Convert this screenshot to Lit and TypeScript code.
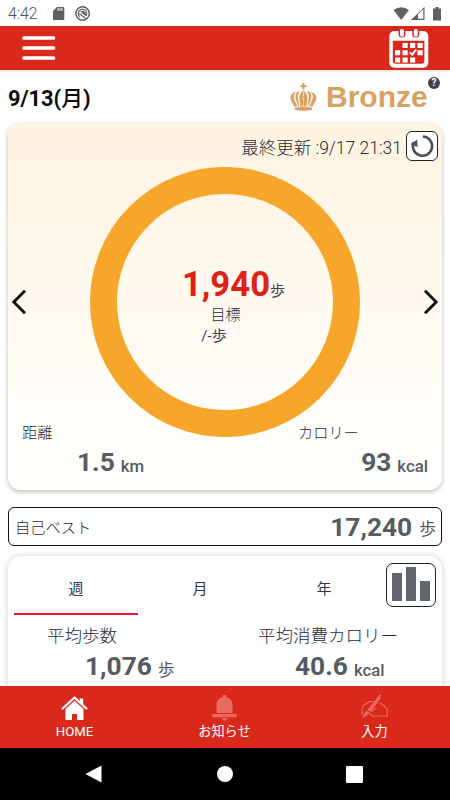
import { LitElement, html, css } from "lit";
import { customElement } from "lit/decorators.js";

@customElement("app-root")
export class AppRoot extends LitElement {
  static styles = css`
    :host { display: block; width: 450px; height: 800px; overflow: hidden; background: #fff; color: #1f2a3a;
      font-family: Roboto, "Noto Sans CJK JP", sans-serif; }
    * { box-sizing: border-box; }
    svg { display: block; flex: none; }
    .screen { display: flex; flex-direction: column; height: 800px; }
    .status { height: 26px; flex: none; display: flex; align-items: center; padding: 1px 8px 0 8px; color: #505050; font-size: 15.8px; font-weight: 300; }
    .clock { width: 44px; }
    .gap { flex: 1; }
    .header { height: 44px; flex: none; background: #da291c; display: flex; justify-content: space-between; align-items: center;
      padding: 0 21px 0 22px; box-shadow: 0 1px 3px #0002; }
    .main { flex: 1; min-height: 0; overflow: hidden; padding: 0 8px; }
    .title { height: 53px; display: flex; align-items: flex-start; }
    .date { font-size: 21.8px; font-weight: 700; color: #0b0b0b; line-height: 26px; padding-top: 16px; flex: 1; }
    .date span { font-weight: 500; }
    .crown { margin-top: 13px; }
    .rank { font: 700 30px/34px "Liberation Sans", sans-serif; color: #d8a263; margin: 10px 0 0 9px; width: 102px; }
    .help { width: 12px; height: 12px; border-radius: 50%; background: #3d424b; color: #fff; font-size: 10px; font-weight: 700;
      line-height: 12px; text-align: center; margin: 7px 2px 0 0; }
    .card { height: 367px; border-radius: 13px; background: linear-gradient(#fff3e0, #fffdf9 76%, #fffefc); box-shadow: 0 2px 5px #0004; }
    .updated { height: 44px; display: flex; justify-content: flex-end; align-items: flex-start; padding: 8px 4px 0 0;
      font-size: 17.5px; font-weight: 300; color: #1f2a3a; }
    .updated .label { line-height: 34px; margin-right: 4px; }
    .refresh { width: 32px; height: 30px; border: 1.3px solid #222; border-radius: 6px; background: #fff; }
    .dial { display: grid; grid-template-columns: 82px 270px 82px; height: 270px; align-items: center; }
    .next { justify-self: end; }
    .ring { width: 270px; height: 270px; border: 27px solid #f6a72b; border-radius: 50%; text-align: center; padding-top: 71px; }
    .steps { display: flex; justify-content: center; align-items: baseline; line-height: 38px; height: 39px; padding-left: 17px; color: #39414e; font-size: 15px; }
    .steps b { font-size: 34.7px; color: #dd2018; }
    .goal { font-size: 15px; font-weight: 300; line-height: 20px; margin-top: 1px; padding-left: 1px; }
    .of { font-size: 15px; line-height: 20px; margin-top: 1px; margin-right: 22px; color: #39414e; }
    .stats { display: flex; justify-content: space-between; margin-top: -14px; padding: 0 14px 0 14px; }
    .stat .name { font-size: 15.2px; font-weight: 300; line-height: 20px; }
    .value { display: flex; align-items: baseline; gap: 6px; line-height: 32px; color: #565b63; font-size: 16.8px; font-weight: 500; }
    .value b { font-size: 26.3px; }
    .value span { transform: translateY(1px); }
    .left .value { margin: 3px 0 0 55px; }
    .right { width: 130px; }
    .right .value { margin-top: 3px; justify-content: flex-end; }
    .best { height: 39px; margin-top: 17px; border: 1.4px solid #111; border-radius: 6px; display: flex; align-items: center;
      justify-content: space-between; padding: 0 5px 0 6px; }
    .best .name { font-size: 15.2px; font-weight: 300; padding-bottom: 2px; }
    .best .value { padding-top: 4px; gap: 7px; }
    .best .value span { transform: translateY(-1px); font-weight: 400; }
    .week { height: 150px; margin-top: 10px; border-radius: 13px 13px 0 0; background: #fff; box-shadow: 0 0 6px #0003; padding: 0 6px; }
    .tabs { height: 59px; display: grid; grid-template-columns: 124px 124px 124px 50px; font-size: 15px; text-align: center; }
    .tab { line-height: 67px; font-weight: 400; color: #303947; height: 59px; }
    .active { border-bottom: 2px solid #f3133d; }
    .chart { width: 50px; height: 44px; margin-top: 7px; border: 1.3px solid #222; border-radius: 7px; background: #fff; }
    .avgs { display: grid; grid-template-columns: 244px 1fr; }
    .avg .name { font-size: 17.5px; font-weight: 300; line-height: 24px; margin-top: 9px; }
    .avg:first-child { padding-left: 33px; }
    .avg:first-child .value { margin-left: 38px; }
    .avg:first-child .value span { font-weight: 400; }
    .avg:last-child .value { margin-left: 37px; }
    .avg .value { margin-top: 2px; line-height: 32px; }
    .nav { height: 62px; flex: none; background: #da291c; display: grid; grid-template-columns: repeat(3, 150px); color: #fff; }
    .item { display: flex; flex-direction: column; align-items: center; font-size: 13.2px; line-height: 18px; padding: 8px 1px 0 0; gap: 2px; }
    .system { height: 52px; flex: none; background: #000; display: grid; grid-template-columns: 187px 76px 183px; place-items: center; }
  `;

  private value(n: string, unit: string) {
    return html`<div class="value"><b>${n}</b><span>${unit}</span></div>`;
  }

  private calendar() {
    const cells = [[1, 0], [2, 0], [3, 0], [0, 1], [1, 1], [3, 1], [0, 2], [1, 2], [2, 2]];
    const d = cells.map(([c, r]) => `M${6 + c * 7.5} ${15 + r * 7.2}h5.2v5h-5.2z`).join("");
    return html`<svg width="40" height="40" viewBox="0 0 40 40">
      <rect x="0.3" y="3" width="39" height="36.8" rx="5" fill="#fff"/>
      <path fill="#da291c" d="M3.8 12.8h31.6v20a3 3 0 0 1-3 3H6.800a3 3 0 0 1-3-3z"/>
      <path fill="none" stroke="#da291c" stroke-width="7" stroke-linecap="round" d="M13 3v3M26.800 3v3"/>
      <path fill="none" stroke="#fff" stroke-width="4" stroke-linecap="round" d="M13 3v3.800M26.800 3v3.800"/>
      <path fill="#fff" d=${d}/>
      <path fill="none" stroke="#fff" stroke-width="1.900" d="m20.700 24.300 2.400 2.400 4-5"/>
    </svg>`;
  }

  render() {
    return html`<div class="screen">
      <div class="status">
        <span class="clock">4:42</span>
        <svg width="40" height="16" viewBox="0 0 40 16">
          <path fill="#606060" d="M5 1h6.300q1 0 1 1v11q0 1-1 1H2q-1 0-1-1V5z"/>
          <path stroke="#ddd" stroke-width="1.200" d="M6 2v3M8 2v3M10 2v3"/>
          <circle cx="30.600" cy="7.500" r="6.700" fill="none" stroke="#606060" stroke-width="1.500"/>
          <path fill="none" stroke="#606060" stroke-width="1.200" d="M28 10.800a4.200 4.200 0 1 1 6-1"/>
          <path fill="#606060" d="M28.300 5.500q2.500-1.500 4.700.5t1.200 4.500z"/>
          <path fill="none" stroke="#606060" stroke-width="1.300" d="m27.200 7.500 6.500 5"/>
        </svg>
        <div class="gap"></div>
        <svg width="49" height="16" viewBox="0 0 49 16" fill="#606060">
          <path d="M.5 4q7.700-5.500 15.500 0L8.200 14z"/>
          <path d="M18 14 31.500.8V14z"/><path fill="#fff" d="M25 8.200 30.300 3v9.800H25z"/>
          <path d="M42.500 1h3v1.500H48V14.500h-8V2.500h2.500z"/>
        </svg>
      </div>
      <div class="header">
        <svg width="34" height="24" viewBox="0 0 34 24"><path stroke="#fff" stroke-width="3.700" stroke-linecap="round" d="M2 2h29.500M2 12h29.500M2 22h29.500"/></svg>
        ${this.calendar()}
      </div>
      <div class="main">
        <div class="title">
          <div class="date">9/13(<span>月</span>)</div>
          <svg class="crown" width="27" height="29" viewBox="0 0 27 29" fill="#d8a263">
            <path d="M12.400 0h2v2.200h2.100v1.800h-2.100v2.600h-2V4H10.300V2.200h2.100z"/>
            <path d="M13.400 7.500c3 2 4.600 5 4 9l-1 7h-6l-1-7c-.6-4 1-7 4-9z"/>
            <path d="M8 8.500c-3 2-3 5-2 8.500l2.400 6.300h1L8.300 17C7.500 13.500 7.700 11 9.700 8.800z"/>
            <path d="M18.800 8.500c3 2 3 5 2 8.500l-2.400 6.300h-1l1.100-6.300c.8-3.500.6-6-1.400-8.200z"/>
            <path d="M4.800 9.300C.8 10.500-.5 14 1 17.500l3.500 6.300 3-.4L5 18C3.400 14.300 3.500 12 6 9.600z"/>
            <path d="M22 9.300c4 1.200 5.300 4.700 3.800 8.200l-3.500 6.300-3-.4 2.500-5.400c1.600-3.700 1.500-6-1-8.400z"/>
            <path d="M4.800 24.700q8.600-1.800 17.200 0v2.300q-8.600 1.600-17.200 0z"/>
            <path fill="none" stroke="#fff" stroke-width="1" stroke-dasharray="1.500 1" d="M13.400 9v14"/>
          </svg>
          <div class="rank">Bronze</div>
          <div class="help">?</div>
        </div>
        <div class="card">
          <div class="updated">
            <span class="label">最終更新 :9/17 21:31</span>
            <div class="refresh">
              <svg width="30" height="28" viewBox="0 0 30 28"><path fill="none" stroke="#4b5058" stroke-width="2.600" d="M15.800 4.500A9.600 9.600 0 1 1 6.800 10"/><path fill="#4b5058" d="M3.500 12.300 10.200 7.500l.4 7.500z"/></svg>
            </div>
          </div>
          <div class="dial">
            <svg width="20" height="28" viewBox="0 0 20 28"><path fill="none" stroke="#111" stroke-width="2.900" d="M17 2.800 5.800 14 17 25.200"/></svg>
            <div class="ring">
              <div class="steps"><b>1,940</b><span>歩</span></div>
              <div class="goal">目標</div>
              <div class="of">/-歩</div>
            </div>
            <svg class="next" width="20" height="28" viewBox="0 0 20 28"><path fill="none" stroke="#111" stroke-width="2.900" d="M3 2.800 14.200 14 3 25.200"/></svg>
          </div>
          <div class="stats">
            <div class="stat left"><div class="name">距離</div>${this.value("1.5", "km")}</div>
            <div class="stat right"><div class="name">カロリー</div>${this.value("93", "kcal")}</div>
          </div>
        </div>
        <div class="best"><span class="name">自己ベスト</span>${this.value("17,240", "歩")}</div>
        <div class="week">
          <div class="tabs">
            <div class="tab active">週</div><div class="tab">月</div><div class="tab">年</div>
            <div class="chart"><svg width="48" height="41" viewBox="0 0 48 41"><path fill="#63666b" d="M5 9h10v28H5zM19 3h10v34H19zM33 17h10v20H33z"/></svg></div>
          </div>
          <div class="avgs">
            <div class="avg"><div class="name">平均歩数</div>${this.value("1,076", "歩")}</div>
            <div class="avg"><div class="name">平均消費カロリー</div>${this.value("40.6", "kcal")}</div>
          </div>
        </div>
      </div>
      <div class="nav">
        <div class="item">
          <svg width="27" height="27" viewBox="0 0 27 27"><path fill="none" stroke="#fff" stroke-width="2.300" stroke-linecap="round" stroke-linejoin="round" d="m1.700 14.500 11.800-11 11.800 11"/><path fill="#fff" d="M18.700 4.500h3.500v7.500l-3.500-3.200zM4.500 15l9-8.300 9 8.300v11H16v-6h-5v6H4.500z"/></svg>
          HOME
        </div>
        <div class="item">
          <svg width="27" height="27" viewBox="0 0 27 27" fill="#e86b61"><circle cx="13.500" cy="2.700" r="2"/><path d="M5.500 19v-8c0-4.500 3.500-8 8-8s8 3.500 8 8v8zM1.700 20h23.600q1 1.600 0 3.200H1.700q-1-1.600 0-3.200zM10.500 24.200h6q-1 2.500-3 2.500t-3-2.500z"/></svg>
          お知らせ
        </div>
        <div class="item">
          <svg width="27" height="27" viewBox="0 0 27 27"><path fill="none" stroke="#e86b61" stroke-width="1.100" stroke-linejoin="round" d="M12.500 7.500H8.500L2.500 11.500l-1.500 4V21M18.500 9.500l2.500.5 5.300 5v7H12l-4.500-2.500M10 17.500l5-3.500"/><path fill="#e86b61" d="m17.500 2.300 2.500 2L9.500 17.800 6.500 15.700zM5.800 16.500 8.600 18.700l-3.200 3.500-2.600 1L1 25.500 2.800 20z"/><path stroke="#e86b61" stroke-width="1.800" d="m16.500 4.500 3-3.500"/></svg>
          入力
        </div>
      </div>
      <div class="system">
        <svg width="17" height="18" viewBox="0 0 17 18"><path fill="#fff" d="M16.500.5v17L.5 9z"/></svg>
        <svg width="16" height="16" viewBox="0 0 16 16"><circle cx="8" cy="8" r="8" fill="#fff"/></svg>
        <svg width="17" height="17" viewBox="0 0 17 17"><rect width="17" height="17" rx="1" fill="#fff"/></svg>
      </div>
    </div>`;
  }
}
